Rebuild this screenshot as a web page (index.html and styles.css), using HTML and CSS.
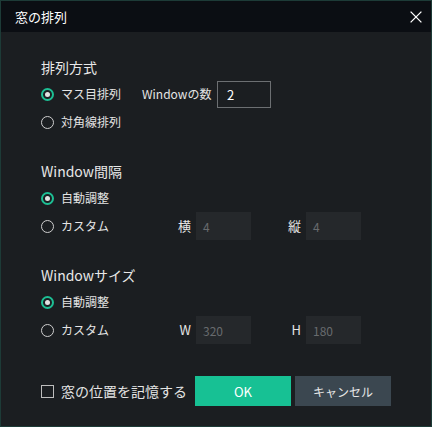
FILE: index.html
```html
<!DOCTYPE html>
<html lang="ja">
<head>
<meta charset="utf-8">
<title>窓の排列</title>
<link rel="stylesheet" href="styles.css">
</head>
<body>
<div class="dialog">
  <div class="titlebar">
    <span class="title">窓の排列</span>
    <span class="close"><svg width="12" height="12" viewBox="0 0 12 12"><path d="M0.6 0.6L11.4 11.4M11.4 0.6L0.6 11.4" stroke="#ffffff" stroke-width="1.3" fill="none"/></svg></span>
  </div>
  <div class="content">
    <section class="group">
      <h2 class="heading">排列方式</h2>
      <div class="row">
        <div class="option option-grid"><span class="radio checked"></span><span>マス目排列</span></div>
        <span class="count-label">Windowの数</span>
        <div class="count">2</div>
      </div>
      <div class="row">
        <div class="option"><span class="radio"></span><span>対角線排列</span></div>
      </div>
    </section>
    <section class="group">
      <h2 class="heading">Window間隔</h2>
      <div class="row">
        <div class="option"><span class="radio checked"></span><span>自動調整</span></div>
      </div>
      <div class="row">
        <div class="option option-custom"><span class="radio"></span><span>カスタム</span></div>
        <div class="fields">
          <div class="field"><span class="field-label">横</span><div class="field-input">4</div></div>
          <div class="field"><span class="field-label">縦</span><div class="field-input">4</div></div>
        </div>
      </div>
    </section>
    <section class="group">
      <h2 class="heading">Windowサイズ</h2>
      <div class="row">
        <div class="option"><span class="radio checked"></span><span>自動調整</span></div>
      </div>
      <div class="row">
        <div class="option option-custom"><span class="radio"></span><span>カスタム</span></div>
        <div class="fields">
          <div class="field"><span class="field-label">W</span><div class="field-input">320</div></div>
          <div class="field"><span class="field-label">H</span><div class="field-input">180</div></div>
        </div>
      </div>
    </section>
    <div class="footer">
      <div class="remember"><span class="checkbox"></span><span>窓の位置を記憶する</span></div>
      <div class="btn btn-ok">OK</div>
      <div class="btn btn-cancel">キャンセル</div>
    </div>
  </div>
</div>
</body>
</html>
```

FILE: styles.css
```css
* { box-sizing: border-box; margin: 0; padding: 0; }
html, body { width: 432px; height: 427px; overflow: hidden; background: #1b1e21; }
body { font-family: "Noto Sans CJK JP", "Noto Sans", sans-serif; color: #e4e4e4; }

.dialog {
  width: 432px;
  height: 427px;
  border: 1px solid #1d3b37;
  background: #1b1e21;
  display: flex;
  flex-direction: column;
}

.titlebar {
  height: 31px;
  flex-shrink: 0;
  background: #0b0e13;
  display: flex;
  align-items: center;
  justify-content: space-between;
  padding: 0 9px 0 14px;
}
.title { font-size: 13px; line-height: 31px; color: #ffffff; }
.close { width: 12px; height: 12px; display: flex; }

.content { padding: 25px 0 0 40px; }

.group + .group { margin-top: 25px; }
.heading {
  font-size: 14px;
  font-weight: normal;
  line-height: 20px;
  height: 20px;
  margin-bottom: 3px;
  color: #e8e8e8;
}

.row { height: 28px; display: flex; align-items: center; font-size: 12px; }

.option { display: flex; align-items: center; gap: 7px; line-height: 16px; }
.option-grid { width: 101px; }
.option-custom { width: 137px; }

.radio {
  width: 13px;
  height: 13px;
  border-radius: 50%;
  border: 1.5px solid #cfcfcf;
  display: flex;
  align-items: center;
  justify-content: center;
  flex-shrink: 0;
}
.radio.checked { border: 2px solid #1dbf94; }
.radio.checked::after {
  content: "";
  width: 5px;
  height: 5px;
  border-radius: 50%;
  background: #e2e2e2;
}

.count-label { width: 75px; line-height: 16px; }
.count {
  width: 54px;
  height: 27px;
  border: 1px solid #6c6f72;
  padding-left: 9px;
  display: flex;
  align-items: center;
  font-size: 13px;
  color: #ffffff;
}

.fields { display: flex; gap: 37px; }
.field { display: flex; align-items: center; }
.field-label { width: 18px; padding-right: 5px; text-align: right; font-size: 13px; line-height: 16px; }
.field-input {
  width: 55px;
  height: 28px;
  background: #25282b;
  color: #686b6e;
  font-size: 12px;
  padding-left: 7px;
  display: flex;
  align-items: center;
}

.footer { margin-top: 32px; height: 30px; display: flex; align-items: center; }
.remember { width: 154px; display: flex; align-items: center; gap: 7px; font-size: 14px; line-height: 18px; }
.checkbox { width: 13px; height: 13px; border: 1px solid #bdbdbd; flex-shrink: 0; }

.btn {
  width: 96px;
  height: 30px;
  display: flex;
  align-items: center;
  justify-content: center;
  font-size: 12px;
}
.btn-ok { background: #17c194; color: #ffffff; font-size: 13px; }
.btn-cancel { margin-left: 4px; background: #3b4750; color: #e6e6e6; }
```
